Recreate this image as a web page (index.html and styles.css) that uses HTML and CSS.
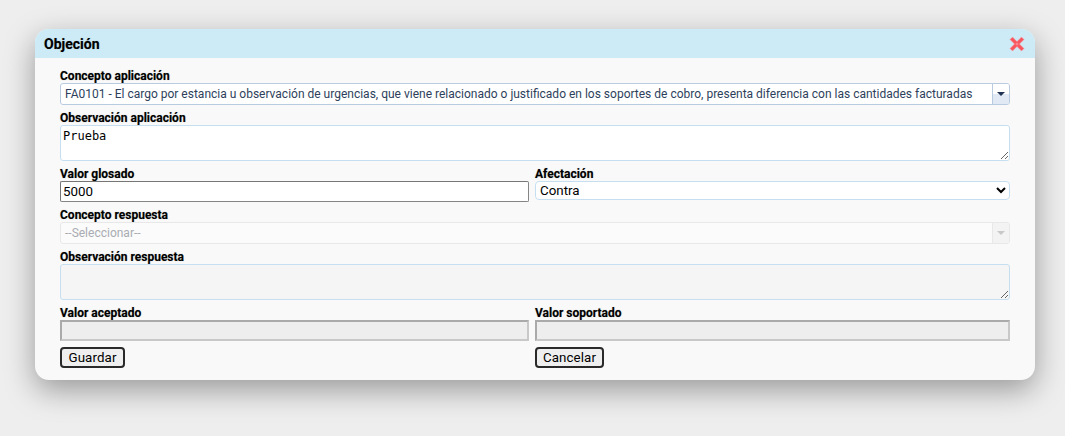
FILE: index.html
```html
<!DOCTYPE html>
<html lang="es">
<head>
<meta charset="utf-8">
<title>Objeción</title>
<link rel="stylesheet" href="styles.css">
</head>
<body>
<div class="dialog">
  <div class="titlebar">
    <span class="title">Objeción</span>
    <svg class="close" width="16" height="16" viewBox="0 0 16 16"><path d="M3.500 1 8 5.500 12.500 1 15 3.500 10.500 8l4.500 4.500-2.500 2.500L8 10.500 3.500 15 1 12.500 5.500 8 1 3.500z" fill="#f8565f" stroke="#f4a3a8" stroke-width=".5"/><circle cx="8" cy="8" r="1.500" fill="#fb7f86"/></svg>
  </div>
  <form class="form">
    <div class="field full">
      <label class="label">Concepto aplicación</label>
      <div class="combo">
        <span class="combo-text">FA0101 - El cargo por estancia u observación de urgencias, que viene relacionado o justificado en los soportes de cobro, presenta diferencia con las cantidades facturadas</span>
        <span class="combo-btn"><i class="arrow"></i></span>
      </div>
    </div>
    <div class="field full">
      <label class="label">Observación aplicación</label>
      <textarea class="area">Prueba</textarea>
    </div>
    <div class="field">
      <label class="label">Valor glosado</label>
      <input class="input" type="text" value="5000">
    </div>
    <div class="field">
      <label class="label">Afectación</label>
      <select class="select"><option>Contra</option></select>
    </div>
    <div class="field full">
      <label class="label">Concepto respuesta</label>
      <div class="combo disabled">
        <span class="combo-text">--Seleccionar--</span>
        <span class="combo-btn"><i class="arrow"></i></span>
      </div>
    </div>
    <div class="field full">
      <label class="label">Observación respuesta</label>
      <textarea class="area" disabled></textarea>
    </div>
    <div class="field">
      <label class="label">Valor aceptado</label>
      <input class="input" type="text" disabled>
    </div>
    <div class="field">
      <label class="label">Valor soportado</label>
      <input class="input" type="text" disabled>
    </div>
    <div class="field"><button class="btn btn-save" type="button">Guardar</button></div>
    <div class="field"><button class="btn btn-cancel" type="button">Cancelar</button></div>
  </form>
</div>
</body>
</html>
```
FILE: styles.css
```css
* { box-sizing: border-box; }
html, body { height: 100%; }
body {
  margin: 0;
  padding: 29px 30px 0 35px;
  background: #eeeeee;
  font-family: Roboto, "Liberation Sans", sans-serif;
  overflow: hidden;
}
.dialog {
  width: 1000px;
  height: 351px;
  background: #f9f9f9;
  border-radius: 14px;
  box-shadow: 0 10px 30px rgba(0, 0, 0, .36);
  overflow: hidden;
}
.titlebar {
  height: 29px;
  background: #cdebf6;
  display: flex;
  align-items: center;
  justify-content: space-between;
  padding: 0 10px 0 9px;
}
.title { font-size: 14px; font-weight: 700; color: #000; text-shadow: 0 0 1px rgba(0, 0, 0, .35); }
.form {
  display: grid;
  grid-template-columns: 469px 475px;
  column-gap: 6px;
  row-gap: 6px;
  padding: 11px 25px 0;
}
.field { display: flex; flex-direction: column; min-width: 0; }
.full { grid-column: 1 / -1; }
.label { font-size: 12px; font-weight: 700; line-height: 14px; height: 14px; color: #000; text-shadow: 0 0 1px rgba(0, 0, 0, .35); }
.combo {
  height: 22px;
  display: flex;
  background: #fff;
  border: 1px solid #b8cbe0;
  border-radius: 3px;
  font-size: 12px;
  color: #2e3f5c;
  overflow: hidden;
}
.combo-text { flex: 1; padding: 0 4px; line-height: 20px; white-space: nowrap; overflow: hidden; }
.combo-btn {
  width: 17px;
  border-left: 1px solid #b8cbe0;
  background: linear-gradient(#ffffff 50%, #e1e9f5 50%);
  display: flex;
  align-items: center;
  justify-content: center;
}
.arrow { width: 0; height: 0; border: 4px solid transparent; border-top: 4px solid #1f3355; border-bottom: 0; }
.combo.disabled { background: #fbfbfb; border-color: #e8e8e8; color: #a9acb2; }
.combo.disabled .combo-btn { background: #f3f3f3; border-left-color: #e8e8e8; }
.combo.disabled .arrow { border-top-color: #c8c8c8; }
.area {
  height: 36px;
  display: block;
  width: 100%;
  margin: 0;
  padding: 3px 2px 2px;
  background: #fff;
  border: 1px solid #c5dff0;
  border-radius: 3px;
  font-family: "DejaVu Sans Mono", monospace;
  font-size: 12px;
  line-height: 14px;
  color: #000;
}
.area:disabled { background: #f5f5f5; }
.input {
  height: 21px;
  width: 100%;
  margin: 0;
  padding: 1px 2px;
  background: #fff;
  border: 1px solid;
  border-color: #767676 #858585 #858585 #767676;
  border-radius: 2px;
  font-family: Roboto, sans-serif;
  font-size: 13.33px;
  color: #000;
}
.input:disabled {
  background: #eeeeee;
  border: 2px solid;
  border-color: #aaaaaa #c8c8c8 #c8c8c8 #aaaaaa;
  border-radius: 0;
}
.select {
  height: 19px;
  width: 100%;
  margin: 0;
  padding: 0;
  background: #fff;
  border: 1px solid #c5dff0;
  border-radius: 4px;
  font-family: Roboto, sans-serif;
  font-size: 13.33px;
  color: #000;
}
.btn {
  height: 21px;
  padding: 0 5px;
  background: #efefef;
  border: 2px solid #2a2a2a;
  border-radius: 4px;
  font-family: Roboto, sans-serif;
  font-size: 13.33px;
  letter-spacing: .1px;
  color: #000;
  align-self: flex-start;
}
.btn-save { width: 65px; }
.btn-cancel { width: 69px; }
```
